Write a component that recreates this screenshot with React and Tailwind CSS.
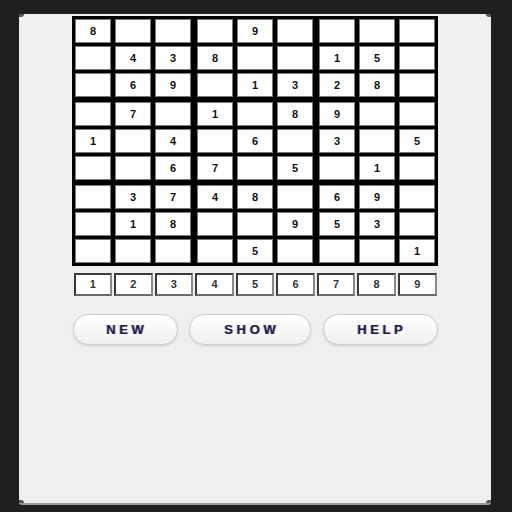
import React from "react";

const grid = [
  "8000900000",
  "043800150",
  "069013280",
  "070108900",
  "104060305",
  "006705010",
  "037480690",
  "018009530",
  "000050001",
];
const rows = [
  [8,0,0,0,9,0,0,0,0],
  [0,4,3,8,0,0,1,5,0],
  [0,6,9,0,1,3,2,8,0],
  [0,7,0,1,0,8,9,0,0],
  [1,0,4,0,6,0,3,0,5],
  [0,0,6,7,0,5,0,1,0],
  [0,3,7,4,8,0,6,9,0],
  [0,1,8,0,0,9,5,3,0],
  [0,0,0,0,5,0,0,0,1],
];

function Cell({ v }) {
  return (
    <div className="w-[36px] h-[24px] bg-white border border-[#7a7a7a] flex items-center justify-center text-[11px] font-bold text-[#111] [font-family:'Liberation_Sans',Arial,sans-serif]">
      {v ? v : ""}
    </div>
  );
}

function Box({ br, bc }) {
  const cells = [];
  for (let r = 0; r < 3; r++) {
    for (let c = 0; c < 3; c++) {
      cells.push(<Cell key={r * 3 + c} v={rows[br * 3 + r][bc * 3 + c]} />);
    }
  }
  return <div className="grid grid-cols-3 gap-x-[4px] gap-y-[3px]">{cells}</div>;
}

function Btn({ label, w }) {
  return (
    <div
      className={`${w} h-[31px] rounded-full border border-[#cfcfcf] bg-gradient-to-b from-white to-[#f1f1f1] shadow-[0_1px_2px_rgba(0,0,0,0.15)] flex items-center justify-center text-[13px] font-bold tracking-[0.28em] text-[#1d1d4a] [font-family:'Liberation_Sans',Arial,sans-serif] [text-shadow:1px_0_rgba(220,60,0,0.35),-1px_0_rgba(0,120,255,0.35)]`}
    >
      <span className="pl-[0.28em]">{label}</span>
    </div>
  );
}

export default function App() {
  const boxes = [];
  for (let br = 0; br < 3; br++)
    for (let bc = 0; bc < 3; bc++) boxes.push(<Box key={br * 3 + bc} br={br} bc={bc} />);
  return (
    <div className="w-[512px] h-[512px] bg-[#1e1e1e] pt-[14px] pl-[19px]">
      <div className="relative w-[472px] h-[491px] bg-[#efefef] rounded-[3px] border-b-2 border-[#9a9a9a] flex flex-col items-center">
        <div className="absolute left-0 top-0 w-[5px] h-[3px] bg-[#555] rounded-br-full" />
        <div className="absolute right-0 top-0 w-[5px] h-[3px] bg-[#555] rounded-bl-full" />
        <div className="absolute left-0 bottom-0 w-[5px] h-[3px] bg-[#555] rounded-tr-full" />
        <div className="absolute right-0 bottom-0 w-[5px] h-[3px] bg-[#555] rounded-tl-full" />
        <div className="mt-[2px] bg-black p-[3px] grid grid-cols-3 gap-x-[6px] gap-y-[5px]">
          {boxes}
        </div>
        <div className="mt-[7px] w-[363px] grid grid-cols-9 gap-[2px]">
          {[1, 2, 3, 4, 5, 6, 7, 8, 9].map((n) => (
            <div
              key={n}
              className="h-[23px] bg-white border-2 border-[#3a3a3a] border-r-[#8a8a8a] border-b-[#6a6a6a] flex items-center justify-center text-[11px] font-bold text-[#333] [font-family:'Liberation_Sans',Arial,sans-serif]"
            >
              {n}
            </div>
          ))}
        </div>
        <div className="mt-[18px] w-[365px] flex justify-between">
          <Btn label="NEW" w="w-[105px]" />
          <Btn label="SHOW" w="w-[122px]" />
          <Btn label="HELP" w="w-[115px]" />
        </div>
      </div>
    </div>
  );
}
